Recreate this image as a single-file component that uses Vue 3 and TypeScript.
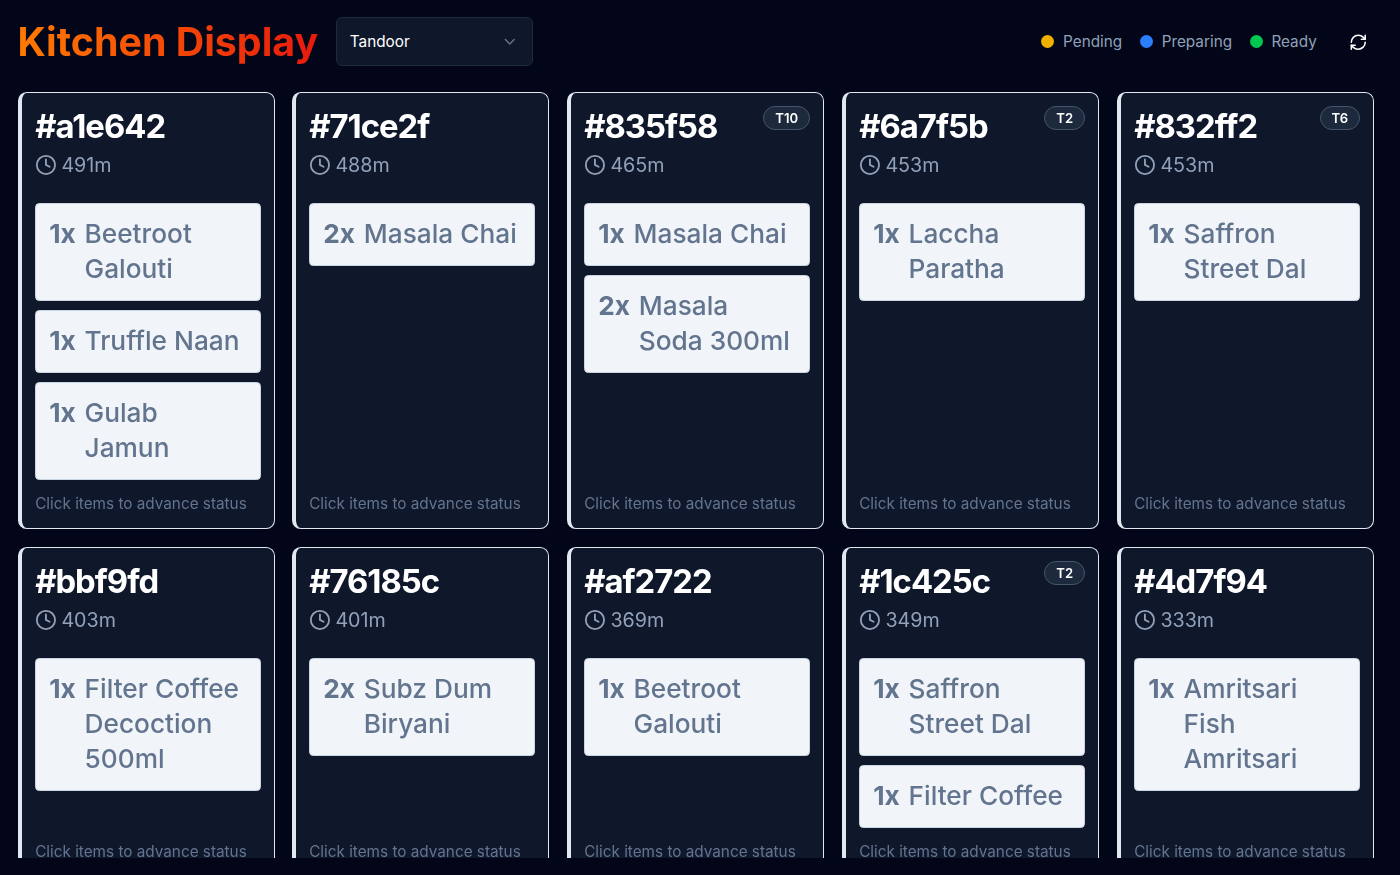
<script setup lang="ts">
interface Item { qty: number; name: string }
interface Order { id: string; time: string; table?: string; items: Item[] }
const orders: Order[] = [
  { id: '#a1e642', time: '491m', items: [{ qty: 1, name: 'Beetroot Galouti' }, { qty: 1, name: 'Truffle Naan' }, { qty: 1, name: 'Gulab Jamun' }] },
  { id: '#71ce2f', time: '488m', items: [{ qty: 2, name: 'Masala Chai' }] },
  { id: '#835f58', time: '465m', table: 'T10', items: [{ qty: 1, name: 'Masala Chai' }, { qty: 2, name: 'Masala Soda 300ml' }] },
  { id: '#6a7f5b', time: '453m', table: 'T2', items: [{ qty: 1, name: 'Laccha Paratha' }] },
  { id: '#832ff2', time: '453m', table: 'T6', items: [{ qty: 1, name: 'Saffron Street Dal' }] },
  { id: '#bbf9fd', time: '403m', items: [{ qty: 1, name: 'Filter Coffee Decoction 500ml' }] },
  { id: '#76185c', time: '401m', items: [{ qty: 2, name: 'Subz Dum Biryani' }] },
  { id: '#af2722', time: '369m', items: [{ qty: 1, name: 'Beetroot Galouti' }] },
  { id: '#1c425c', time: '349m', table: 'T2', items: [{ qty: 1, name: 'Saffron Street Dal' }, { qty: 1, name: 'Filter Coffee' }] },
  { id: '#4d7f94', time: '333m', items: [{ qty: 1, name: 'Amritsari Fish Amritsari' }] },
]
const legend = [
  { label: 'Pending', color: 'pending' },
  { label: 'Preparing', color: 'preparing' },
  { label: 'Ready', color: 'ready' },
]
</script>

<template>
  <div class="page">
    <header class="header">
      <div class="header-left">
        <h1 class="title">Kitchen Display</h1>
        <div class="select">
          <span>Tandoor</span>
          <svg class="chev" viewBox="0 0 24 24" fill="none" stroke="currentColor" stroke-width="2" stroke-linecap="round" stroke-linejoin="round"><path d="m6 9 6 6 6-6" /></svg>
        </div>
      </div>
      <div class="header-right">
        <div v-for="l in legend" :key="l.label" class="legend">
          <span class="dot" :class="l.color"></span>
          <span>{{ l.label }}</span>
        </div>
        <button class="refresh" type="button" aria-label="Refresh">
          <svg viewBox="0 0 24 24" fill="none" stroke="currentColor" stroke-width="2" stroke-linecap="round" stroke-linejoin="round"><path d="M3 12a9 9 0 0 1 9-9 9.75 9.75 0 0 1 6.74 2.74L21 8" /><path d="M21 3v5h-5" /><path d="M21 12a9 9 0 0 1-9 9 9.75 9.75 0 0 1-6.74-2.74L3 16" /><path d="M8 16H3v5" /></svg>
        </button>
      </div>
    </header>
    <main class="grid">
      <article v-for="o in orders" :key="o.id" class="card">
        <span v-if="o.table" class="badge">{{ o.table }}</span>
        <h2 class="order-id">{{ o.id }}</h2>
        <div class="time">
          <svg viewBox="0 0 24 24" fill="none" stroke="currentColor" stroke-width="2" stroke-linecap="round" stroke-linejoin="round"><circle cx="12" cy="12" r="10" /><path d="M12 6v6l4 2" /></svg>
          <span>{{ o.time }}</span>
        </div>
        <div class="items">
          <div v-for="it in o.items" :key="it.name" class="item">
            <span class="qty">{{ it.qty }}x</span>
            <span>{{ it.name }}</span>
          </div>
        </div>
        <p class="hint">Click items to advance status</p>
      </article>
    </main>
  </div>
</template>

<style scoped>
.page { height: 875px; box-sizing: border-box; padding: 17.25px 26.25px 17.5px 17.5px; background: #020618; display: flex; flex-direction: column; overflow: hidden; font-family: Inter, "Liberation Sans", sans-serif; color: #fff; }
.header { display: flex; align-items: center; justify-content: space-between; height: 49px; flex: none; margin-bottom: 26px; }
.header-left { display: flex; align-items: center; gap: 17.5px; }
.title { margin: 0; font-size: 39.375px; line-height: 49px; font-weight: 700; background: linear-gradient(90deg, #ff7a00, #e8190c); -webkit-background-clip: text; background-clip: text; color: transparent; }
.select { width: 197px; height: 49px; box-sizing: border-box; padding: 0 13.125px; display: flex; align-items: center; justify-content: space-between; background: #0f172b; border: 1px solid #1d293d; border-radius: 6px; font-size: 15.3125px; }
.chev { width: 17.5px; height: 17.5px; color: #62748e; }
.header-right { display: flex; align-items: center; gap: 17.5px; }
.legend { display: flex; align-items: center; gap: 8.75px; font-size: 15.3125px; color: #90a1b9; }
.dot { width: 13.125px; height: 13.125px; border-radius: 50%; }
.pending { background: #f0b100; }
.preparing { background: #2b7fff; }
.ready { background: #00c950; }
.refresh { width: 31.5px; height: 31.5px; margin-left: 8px; padding: 0; display: flex; align-items: center; justify-content: center; background: none; border: none; color: #fff; }
.refresh svg { width: 18.5px; height: 18.5px; }
.grid { flex: 1; min-height: 0; overflow: hidden; display: grid; grid-template-columns: repeat(5, minmax(0, 1fr)); grid-auto-rows: min-content; gap: 17.5px; align-content: start; }
.card { position: relative; display: flex; flex-direction: column; box-sizing: border-box; padding: 13.7px 13.125px 13.125px; background: #0f172b; border: 1px solid #e2e8f0; border-left-width: 4px; border-radius: 8.75px; will-change: transform; }
.badge { position: absolute; top: 13.125px; right: 13.125px; height: 24px; box-sizing: border-box; padding: 0 11px; display: flex; align-items: center; border-radius: 12px; background: #1d293d; border: 1px solid #45556c; font-size: 13.125px; font-weight: 600; }
.order-id { margin: 0; font-size: 32.8125px; line-height: 39.375px; font-weight: 700; letter-spacing: -0.03em; }
.time { margin-top: 3.8px; display: flex; align-items: center; gap: 4.375px; color: #90a1b9; font-size: 19.6875px; line-height: 30.625px; }
.time svg { width: 21.875px; height: 21.875px; }
.items { flex: 1; margin-top: 22.125px; display: flex; flex-direction: column; gap: 8.75px; }
.item { display: flex; gap: 8.75px; padding: 12.125px 13.125px 14.125px; border: 1px solid #cad5e2; border-radius: 4.375px; background: #f1f5f9; color: #62748e; font-size: 26.25px; line-height: 35px; font-weight: 500; }
.qty { font-weight: 700; }
.hint { margin: 13.6px 0 0; color: #62748e; font-size: 15.3125px; line-height: 21.875px; }
</style>

<style>
html, body { margin: 0; background: #020618; }
</style>
